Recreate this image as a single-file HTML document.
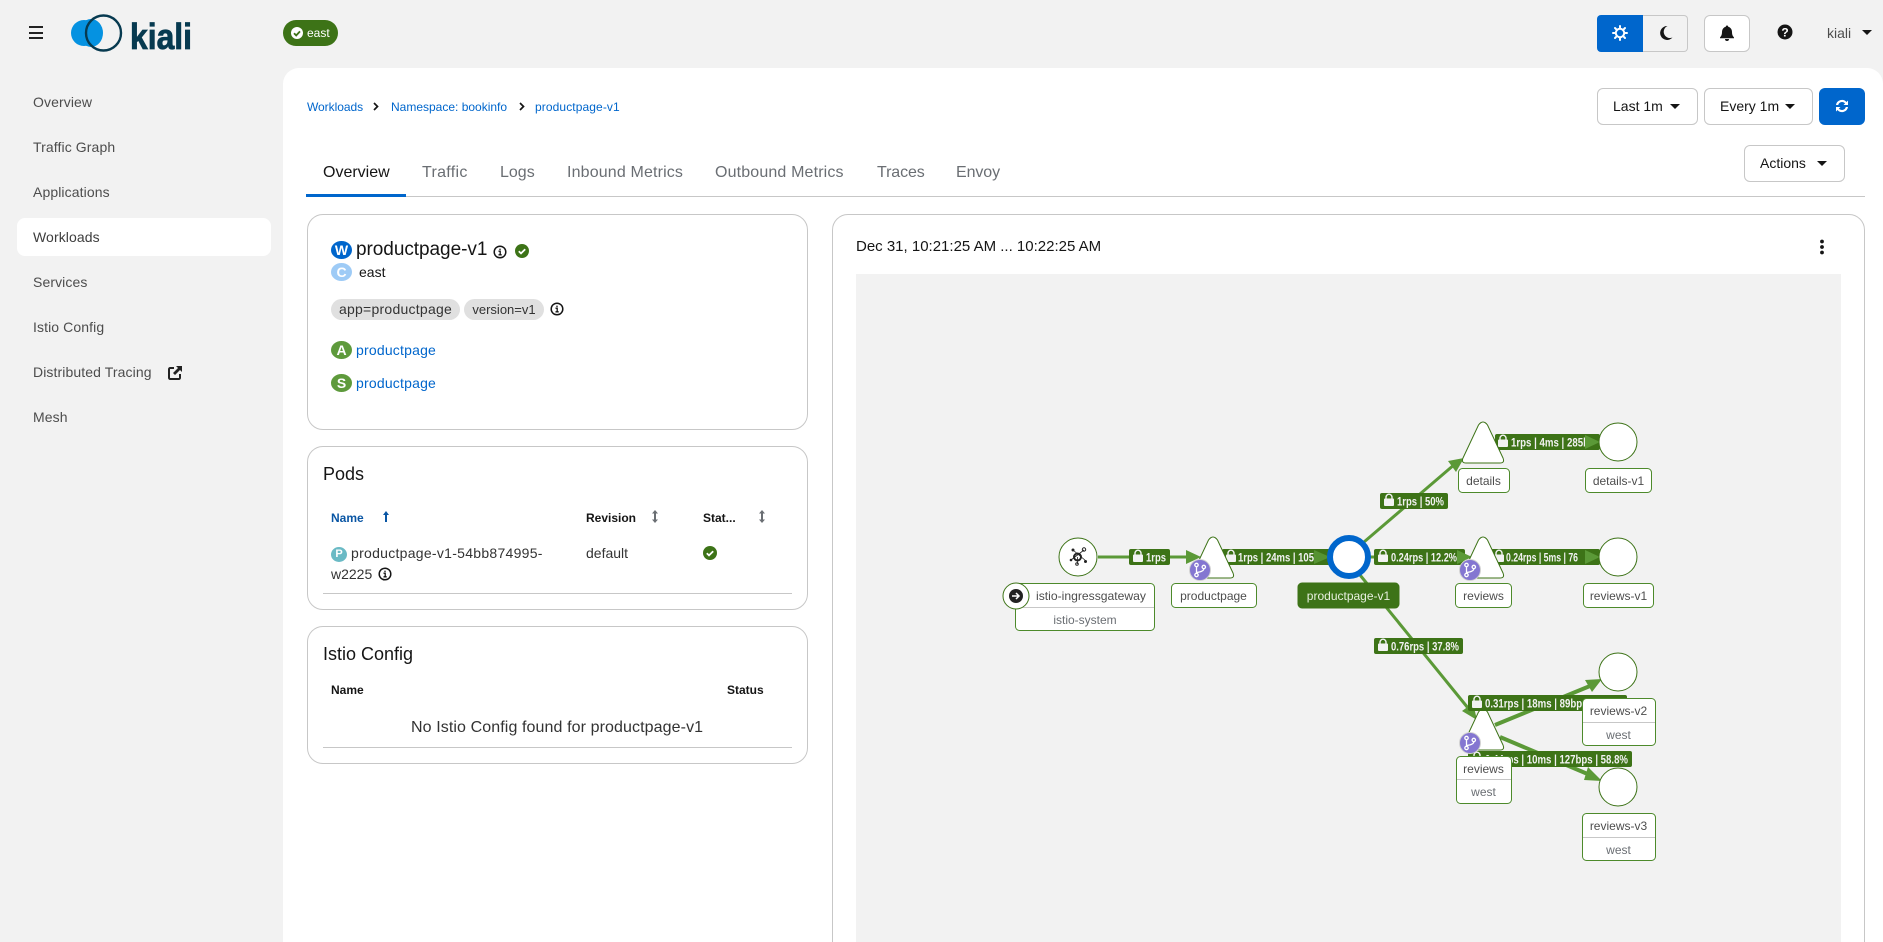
<!DOCTYPE html>
<html lang="en"><head><meta charset="utf-8"><title>Kiali</title>
<style>
*{box-sizing:border-box}
html,body{margin:0;padding:0;width:1883px;height:942px;overflow:hidden;background:#f2f2f2;font-family:"Liberation Sans",sans-serif;color:#151515;font-size:14px}
#p{position:relative;width:1883px;height:942px;overflow:hidden;background:#f2f2f2}
.a{position:absolute;white-space:nowrap;line-height:1}
.nav{position:absolute;left:33px;color:#4d4d4d;font-size:14px;line-height:16px;white-space:nowrap;letter-spacing:.1px}
.main{position:absolute;left:283px;top:68px;width:1600px;height:874px;background:#fff;border-radius:16px 16px 0 0}
.card{position:absolute;background:#fff;border:1px solid #c7c7c7;border-radius:16px}
.btn{position:absolute;background:#fff;border:1px solid #c7c7c7;border-radius:6px;height:37px;line-height:35px;color:#151515;font-size:14px;padding-left:15px}
.car{position:absolute;width:0;height:0;border-left:5px solid transparent;border-right:5px solid transparent;border-top:5.5px solid #151515}
.link{color:#0066cc}
.tab{position:absolute;top:164px;font-size:16px;line-height:18px;color:#6a6e73;white-space:nowrap;letter-spacing:.15px}
.b{position:absolute;border-radius:50%;color:#fff;text-align:center;font-weight:bold;font-size:13px}
svg{position:absolute;left:0;top:0}
.th{font-size:12px;font-weight:bold;color:#151515}
.chip{position:absolute;top:299px;height:21px;line-height:21px;background:#e0e0e0;border-radius:11px;font-size:13px;text-align:center;color:#333}
.ln{position:absolute;height:1px;background:#c7c7c7}
</style></head><body>
<div id="p">

<!-- header -->
<div class="a" style="left:29px;top:26px;width:14px;height:2px;background:#222"></div>
<div class="a" style="left:29px;top:32px;width:14px;height:2px;background:#222"></div>
<div class="a" style="left:29px;top:37px;width:14px;height:2px;background:#222"></div>
<svg width="240" height="68" style="left:0;top:0">
<circle cx="84" cy="33" r="13" fill="#0592e1"/>
<ellipse cx="91" cy="33" rx="12" ry="14" fill="#0592e1"/>
<circle cx="103.500" cy="33" r="17.500" fill="none" stroke="#073a50" stroke-width="2.400"/>
<text x="130" y="49" font-family="Liberation Sans" font-size="36" font-weight="bold" fill="#073a50" stroke="#073a50" stroke-width=".8" textLength="62" lengthAdjust="spacingAndGlyphs">kiali</text>
</svg>
<div class="a" style="left:283px;top:20px;width:55px;height:26px;border-radius:13px;background:#3d7317"></div>
<svg width="14" height="14" style="left:290px;top:26px"><circle cx="7" cy="7" r="6" fill="#fff"/><path d="M4 7.200l2.200 2.200L10 5.400" fill="none" stroke="#3d7317" stroke-width="1.800"/></svg>
<div class="a" style="left:307px;top:27px;color:#fff;font-size:12px">east</div>

<div class="a" style="left:1597px;top:15px;width:46px;height:37px;background:#0066cc;border-radius:4px 0 0 4px"></div>
<svg width="16" height="16" style="left:1612px;top:25px"><circle cx="8" cy="8" r="4.200" fill="none" stroke="#fff" stroke-width="2"/><g stroke="#fff" stroke-width="2" stroke-linecap="round"><path d="M8 1v1.500M8 13.500V15M1 8h1.500M13.500 8H15M3 3l1 1M12 12l1 1M13 3l-1 1M4 12l-1 1"/></g></svg>
<div class="a" style="left:1643px;top:15px;width:45px;height:37px;border:1px solid #c7c7c7;border-left:0;border-radius:0 4px 4px 0"></div>
<svg width="16" height="16" style="left:1658px;top:25px"><path d="M9.500 1a7 7 0 1 0 5 11.500A6.200 6.200 0 0 1 9.500 1Z" fill="#151515"/></svg>
<div class="a" style="left:1704px;top:15px;width:46px;height:37px;background:#fff;border:1px solid #c7c7c7;border-radius:6px"></div>
<svg width="16" height="16" style="left:1719px;top:25px"><path d="M8 0.500a1.200 1.200 0 0 1 1.200 1.300A5 5 0 0 1 13 6.800c0 3.500 1 4.500 2 5.700v.7H1v-.7c1-1.200 2-2.200 2-5.700a5 5 0 0 1 3.800-5A1.200 1.200 0 0 1 8 .5ZM6 14h4a2 2 0 0 1-4 0Z" fill="#151515"/></svg>
<svg width="16" height="16" style="left:1777px;top:24px"><circle cx="8" cy="8" r="7.500" fill="#151515"/><text x="8" y="12.500" text-anchor="middle" font-family="Liberation Sans" font-weight="bold" font-size="12" fill="#fff">?</text></svg>
<div class="a" style="left:1827px;top:26px;color:#4d4d4d;font-size:14px">kiali</div>
<div class="car" style="left:1862px;top:30px"></div>

<!-- sidebar -->
<div class="a" style="left:17px;top:218px;width:254px;height:38px;background:#fff;border-radius:8px"></div>
<div class="nav" style="top:94px">Overview</div>
<div class="nav" style="top:139px">Traffic Graph</div>
<div class="nav" style="top:184px">Applications</div>
<div class="nav" style="top:229px;color:#3d3d3d">Workloads</div>
<div class="nav" style="top:274px">Services</div>
<div class="nav" style="top:319px">Istio Config</div>
<div class="nav" style="top:364px">Distributed Tracing</div>
<svg width="15" height="15" style="left:168px;top:365px"><path d="M6 3H2.200A1.200 1.200 0 0 0 1 4.200v8.600A1.200 1.200 0 0 0 2.200 14h8.600a1.200 1.200 0 0 0 1.200-1.200V9" fill="none" stroke="#222" stroke-width="2"/><path d="M8 1h6v6l-2-2-5 5-2-2 5-5Z" fill="#222"/></svg>
<div class="nav" style="top:409px">Mesh</div>

<div class="main"></div>

<!-- breadcrumb -->
<div class="a link" style="left:307px;top:101px;font-size:12px;line-height:13px;letter-spacing:-.05px">Workloads</div>
<svg width="8" height="10" style="left:372px;top:102px"><path d="M2 1l3.500 3.500L2 8" fill="none" stroke="#151515" stroke-width="1.700"/></svg>
<div class="a link" style="left:391px;top:101px;font-size:12px;line-height:13px;letter-spacing:0">Namespace: bookinfo</div>
<svg width="8" height="10" style="left:518px;top:102px"><path d="M2 1l3.500 3.500L2 8" fill="none" stroke="#151515" stroke-width="1.700"/></svg>
<div class="a link" style="left:535px;top:101px;font-size:12px;line-height:13px;letter-spacing:.1px">productpage-v1</div>

<!-- controls -->
<div class="btn" style="left:1597px;top:88px;width:101px">Last 1m</div><div class="car" style="left:1670px;top:104px"></div>
<div class="btn" style="left:1704px;top:88px;width:109px">Every 1m</div><div class="car" style="left:1785px;top:104px"></div>
<div class="a" style="left:1819px;top:88px;width:46px;height:37px;background:#0066cc;border-radius:6px"></div>
<svg width="16" height="16" style="left:1834px;top:98px"><path d="M2 7a6 6 0 0 1 10.500-3L14 2.500V7H9.500l1.600-1.600A4 4 0 0 0 4.200 7Z M14 9a6 6 0 0 1-10.500 3L2 13.500V9h4.500l-1.600 1.600A4 4 0 0 0 11.800 9Z" fill="#fff"/></svg>
<div class="btn" style="left:1744px;top:145px;width:101px">Actions</div><div class="car" style="left:1817px;top:161px"></div>

<!-- tabs -->
<div class="tab" style="left:323px;color:#151515;letter-spacing:0">Overview</div>
<div class="tab" style="left:422px;letter-spacing:.3px">Traffic</div>
<div class="tab" style="left:500px;letter-spacing:0">Logs</div>
<div class="tab" style="left:567px">Inbound Metrics</div>
<div class="tab" style="left:715px">Outbound Metrics</div>
<div class="tab" style="left:877px;letter-spacing:-.1px">Traces</div>
<div class="tab" style="left:956px;letter-spacing:-.1px">Envoy</div>
<div class="ln" style="left:306px;top:196px;width:1559px"></div>
<div class="a" style="left:306px;top:194px;width:100px;height:3px;background:#0066cc"></div>

<!-- overview card -->
<div class="card" style="left:307px;top:214px;width:501px;height:216px"></div>
<div class="b" style="left:331px;top:241px;width:21px;height:18px;line-height:18px;background:#0066cc;font-size:14px">W</div>
<div class="a" style="left:356px;top:240px;font-size:19px;line-height:20px;color:#151515;letter-spacing:-.05px">productpage-v1</div>
<svg width="14" height="14" style="left:493px;top:245px"><circle cx="7" cy="7" r="5.800" fill="none" stroke="#151515" stroke-width="1.500"/><path d="M5.500 6.200h1.700v3.400M5.500 9.800h3.200M7 3.600v1.400" fill="none" stroke="#151515" stroke-width="1.300"/></svg>
<svg width="14" height="14" style="left:515px;top:244px"><circle cx="7" cy="7" r="7" fill="#3d7317"/><path d="M3.800 7.200l2.200 2.200L10.200 5.200" fill="none" stroke="#fff" stroke-width="1.800"/></svg>
<div class="b" style="left:331px;top:263px;width:21px;height:18px;line-height:18px;background:#9ecbf6;font-size:14px">C</div>
<div class="a" style="left:359px;top:265px;font-size:14px">east</div>
<div class="chip" style="left:331px;width:129px;font-size:14px;letter-spacing:.25px">app=productpage</div>
<div class="chip" style="left:464px;width:80px">version=v1</div>
<svg width="14" height="14" style="left:550px;top:302px"><circle cx="7" cy="7" r="5.800" fill="none" stroke="#151515" stroke-width="1.500"/><path d="M5.500 6.200h1.700v3.400M5.500 9.800h3.200M7 3.600v1.400" fill="none" stroke="#151515" stroke-width="1.300"/></svg>
<div class="b" style="left:331px;top:341px;width:21px;height:18px;line-height:18px;background:#5e9a3c;font-size:14px">A</div>
<div class="a link" style="left:356px;top:343px;font-size:14px;letter-spacing:.2px">productpage</div>
<div class="b" style="left:331px;top:374px;width:21px;height:18px;line-height:18px;background:#5e9a3c;font-size:14px">S</div>
<div class="a link" style="left:356px;top:376px;font-size:14px;letter-spacing:.2px">productpage</div>

<!-- pods -->
<div class="card" style="left:307px;top:446px;width:501px;height:164px"></div>
<div class="a" style="left:323px;top:464px;font-size:18px;line-height:20px">Pods</div>
<div class="a th" style="left:331px;top:512px;color:#0a56a4">Name</div>
<svg width="10" height="13" style="left:381px;top:510px"><path d="M5 1l3 4H6v7H4V5H2Z" fill="#0a56a4"/></svg>
<div class="a th" style="left:586px;top:512px">Revision</div>
<svg width="10" height="13" style="left:650px;top:510px"><path d="M5 0l3 3.500H6v6h2L5 13 2 9.500h2v-6H2Z" fill="#6a6e73"/></svg>
<div class="a th" style="left:703px;top:512px">Stat...</div>
<svg width="10" height="13" style="left:757px;top:510px"><path d="M5 0l3 3.500H6v6h2L5 13 2 9.500h2v-6H2Z" fill="#6a6e73"/></svg>
<div class="b" style="left:331px;top:547px;width:16px;height:15px;line-height:15px;background:#6abac5;font-size:11px">P</div>
<div class="a" style="left:351px;top:546px;font-size:14px;color:#333;letter-spacing:.28px">productpage-v1-54bb874995-</div>
<div class="a" style="left:331px;top:567px;font-size:14px;color:#333">w2225</div>
<svg width="14" height="14" style="left:378px;top:567px"><circle cx="7" cy="7" r="5.800" fill="none" stroke="#151515" stroke-width="1.500"/><path d="M5.500 6.200h1.700v3.400M5.500 9.800h3.200M7 3.600v1.400" fill="none" stroke="#151515" stroke-width="1.300"/></svg>
<div class="a" style="left:586px;top:546px;font-size:14px;color:#333">default</div>
<svg width="14" height="14" style="left:703px;top:546px"><circle cx="7" cy="7" r="7" fill="#3d7317"/><path d="M3.800 7.200l2.200 2.200L10.200 5.200" fill="none" stroke="#fff" stroke-width="1.800"/></svg>
<div class="ln" style="left:323px;top:593px;width:469px"></div>

<!-- istio config -->
<div class="card" style="left:307px;top:626px;width:501px;height:138px"></div>
<div class="a" style="left:323px;top:644px;font-size:18px;line-height:20px">Istio Config</div>
<div class="a th" style="left:331px;top:684px">Name</div>
<div class="a th" style="left:727px;top:684px">Status</div>
<div class="a" style="left:411px;top:720px;font-size:16px;color:#333;letter-spacing:.1px">No Istio Config found for productpage-v1</div>
<div class="ln" style="left:323px;top:747px;width:469px"></div>

<!-- graph card -->
<div class="a" style="left:832px;top:214px;width:1033px;height:760px;background:#fff;border:1px solid #c7c7c7;border-radius:16px"></div>
<div class="a" style="left:856px;top:238px;font-size:15px;line-height:17px;color:#151515">Dec 31, 10:21:25 AM ... 10:22:25 AM</div>
<svg width="6" height="16" style="left:1819px;top:239px"><circle cx="3" cy="2.500" r="1.900" fill="#151515"/><circle cx="3" cy="8" r="1.900" fill="#151515"/><circle cx="3" cy="13.500" r="1.900" fill="#151515"/></svg>
<div class="a" style="left:856px;top:274px;width:985px;height:668px;background:#f2f2f2"></div>

<svg width="1883" height="942" viewBox="0 0 1883 942" font-family="Liberation Sans">
<defs>
<g id="tri"><path d="M-4.500 3 Q0 -3 4.500 3 L20 36 Q22 41 17 41 H-17 Q-22 41 -20 36 Z" fill="#fff" stroke="#3d7317" stroke-width="1"/></g>
<g id="bdg"><circle r="10.500" fill="#8476d1" stroke="#d2d2d2" stroke-width="1"/><g fill="none" stroke="#fff" stroke-width="1.300"><circle cx="-3.500" cy="-5" r="1.700"/><circle cx="-3.500" cy="5" r="1.700"/><circle cx="3.800" cy="-3" r="1.700"/><path d="M-3.500 -3.300V3.300M3.800 -1.300Q3.800 1.500 -3.500 2.500"/></g></g>
<g id="lock"><rect x="0" y="4.500" width="10" height="7.500" rx="1" fill="#f2f2f2"/><path d="M2 4.800V3.200a3 3 0 0 1 6 0V4.800" fill="none" stroke="#f2f2f2" stroke-width="1.400"/></g>
</defs>
<!-- edges -->
<g stroke="#5b9937" stroke-width="3" fill="none">
<path d="M1098 557H1188"/>
<path d="M1235 557H1328"/>
<path d="M1364 542L1455 464"/>
<path d="M1370 557H1460"/>
<path d="M1504 442H1590"/>
<path d="M1504 557H1590"/>
<path d="M1360 575L1468 708"/>
<path d="M1495 725L1590 686" stroke-width="4"/>
<path d="M1500 737L1590 775" stroke-width="4"/>
</g>
<!-- edge labels -->
<g fill="#3d7317">
<rect x="1129" y="549" width="41" height="16" rx="2"/>
<rect x="1222" y="549" width="110" height="16" rx="2"/>
<rect x="1380" y="493" width="68" height="16" rx="2"/>
<rect x="1374" y="549" width="91" height="16" rx="2"/>
<rect x="1495" y="434" width="105" height="16" rx="2"/>
<rect x="1490" y="549" width="110" height="16" rx="2"/>
<rect x="1374" y="638" width="89" height="16" rx="2"/>
<rect x="1468" y="751" width="164" height="16" rx="2"/>
</g>
<g fill="#f2f2f2" font-size="12" font-weight="bold">
<use href="#lock" x="1133" y="550"/><text x="1146" y="561.500" textLength="20" lengthAdjust="spacingAndGlyphs">1rps</text>
<use href="#lock" x="1226" y="550"/><text x="1238" y="561.500" textLength="76" lengthAdjust="spacingAndGlyphs">1rps | 24ms | 105</text>
<use href="#lock" x="1384" y="494"/><text x="1397" y="505.500" textLength="47" lengthAdjust="spacingAndGlyphs">1rps | 50%</text>
<use href="#lock" x="1378" y="550"/><text x="1391" y="561.500" textLength="66" lengthAdjust="spacingAndGlyphs">0.24rps | 12.2%</text>
<use href="#lock" x="1498" y="435"/><text x="1511" y="446.500" textLength="78" lengthAdjust="spacingAndGlyphs">1rps | 4ms | 285b</text>
<use href="#lock" x="1494" y="550"/><text x="1506" y="561.500" textLength="72" lengthAdjust="spacingAndGlyphs">0.24rps | 5ms | 76</text>
<use href="#lock" x="1378" y="639"/><text x="1391" y="650.500" textLength="68" lengthAdjust="spacingAndGlyphs">0.76rps | 37.8%</text>
<use href="#lock" x="1472" y="752"/><text x="1485" y="763.500" textLength="143" lengthAdjust="spacingAndGlyphs">0.44rps | 10ms | 127bps | 58.8%</text>
</g>
<!-- arrows -->
<g fill="#5b9937">
<path d="M1186 550L1201 557L1186 564Z"/>
<path d="M1314 550L1330 557L1314 564Z" opacity=".85"/>
<path d="M1448 461L1464 458L1456 472Z"/>
<path d="M1457 550L1472 557L1457 564Z"/>
<path d="M1585 435L1600 442L1585 449Z"/>
<path d="M1585 550L1600 557L1585 564Z"/>
<path d="M1462 711L1477 720L1473 703Z"/>
<path d="M1585 680L1602 679L1592 692Z"/>
<path d="M1588 767L1602 781L1584 780Z"/>
</g>
<!-- nodes -->
<g fill="#fff" stroke="#3d7317" stroke-width="1">
<circle cx="1078" cy="557" r="19"/>
<circle cx="1618" cy="442" r="19"/>
<circle cx="1618" cy="557" r="19"/>
<circle cx="1618" cy="672" r="19"/>
<circle cx="1618" cy="787" r="19"/>
</g>
<use href="#tri" x="1213" y="537"/>
<use href="#tri" x="1483" y="422"/>
<use href="#tri" x="1483" y="537"/>
<use href="#tri" x="1483" y="709"/>
<rect x="1468" y="695" width="159" height="16" rx="2" fill="#3d7317"/>
<g fill="#f2f2f2" font-size="12" font-weight="bold">
<use href="#lock" x="1472" y="696"/><text x="1485" y="707.500" textLength="138" lengthAdjust="spacingAndGlyphs">0.31rps | 18ms | 89bps | 41.2%</text>
</g>
<circle cx="1349" cy="557" r="19" fill="#fff" stroke="#0066cc" stroke-width="6"/>
<use href="#bdg" x="1200" y="570"/>
<use href="#bdg" x="1470" y="570"/>
<use href="#bdg" x="1470" y="743"/>
<!-- gateway icon -->
<g fill="#222" stroke="none">
<circle cx="1077.500" cy="557" r="3.500" fill="none" stroke="#222" stroke-width="2"/>
<circle cx="1073" cy="550" r="1.500"/><circle cx="1084" cy="549.500" r="1.700" fill="none" stroke="#222"/><circle cx="1071" cy="560" r="1.300"/><circle cx="1085.500" cy="561.500" r="1.500"/><circle cx="1077" cy="564" r="1.300" fill="none" stroke="#222"/>
<path d="M1073 550L1086 561M1084 550L1071 560M1077.500 557V564" stroke="#222" stroke-width=".8"/>
</g>
<!-- node labels -->
<g fill="#fff" stroke="#4d8a2b" stroke-width="1">
<rect x="1015.500" y="583.500" width="139" height="47" rx="4"/>
<rect x="1171.500" y="583.500" width="85" height="24" rx="4"/>
<rect x="1458.500" y="468.500" width="51" height="24" rx="4"/>
<rect x="1585.500" y="468.500" width="66" height="24" rx="4"/>
<rect x="1455.500" y="583.500" width="56" height="24" rx="4"/>
<rect x="1583.500" y="583.500" width="70" height="24" rx="4"/>
<rect x="1456.500" y="756.500" width="55" height="47" rx="4"/>
<rect x="1582.500" y="698.500" width="73" height="47" rx="4"/>
<rect x="1582.500" y="813.500" width="73" height="47" rx="4"/>
<rect x="1298" y="583" width="101" height="25" rx="4" fill="#3d7317" stroke="#3d7317"/>
</g>
<g stroke="#c7c7c7"><path d="M1016 607.500H1154M1457 779.500H1511M1583 722.500H1655M1583 837.500H1655"/></g>
<circle cx="1016" cy="596" r="13" fill="#fff" stroke="#3d7317"/>
<circle cx="1016" cy="596" r="7" fill="#222"/>
<path d="M1012 596h6M1016 593l3 3-3 3" fill="none" stroke="#fff" stroke-width="1.500"/>
<g font-size="12" fill="#4d4d4d" text-anchor="middle">
<text x="1091" y="600" textLength="110" lengthAdjust="spacingAndGlyphs">istio-ingressgateway</text>
<text x="1085" y="624" fill="#6a6e73">istio-system</text>
<text x="1213.500" y="600">productpage</text>
<text x="1348.500" y="600" fill="#e8f0e0">productpage-v1</text>
<text x="1483.500" y="485">details</text>
<text x="1618.500" y="485">details-v1</text>
<text x="1483.500" y="600">reviews</text>
<text x="1618.500" y="600">reviews-v1</text>
<text x="1483.500" y="773">reviews</text>
<text x="1483.500" y="796" fill="#6a6e73">west</text>
<text x="1618.500" y="715">reviews-v2</text>
<text x="1618.500" y="739" fill="#6a6e73">west</text>
<text x="1618.500" y="830">reviews-v3</text>
<text x="1618.500" y="854" fill="#6a6e73">west</text>
</g>
</svg>
</div>
</body></html>
